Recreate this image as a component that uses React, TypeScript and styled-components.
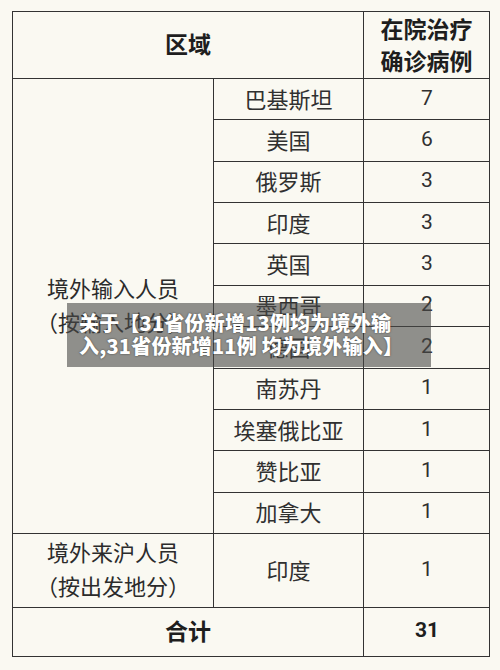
import React from 'react'
import styled, { createGlobalStyle } from 'styled-components'

const GlobalStyle = createGlobalStyle`
  html, body {
    margin: 0;
    padding: 0;
    background: #faf9f2;
  }
  body {
    font-family: 'Noto Sans CJK SC', 'Noto Sans', sans-serif;
    color: #2b2b2b;
  }
`

const rows = [
  { place: '巴基斯坦', count: 7 },
  { place: '美国', count: 6 },
  { place: '俄罗斯', count: 3 },
  { place: '印度', count: 3 },
  { place: '英国', count: 3 },
  { place: '墨西哥', count: 2 },
  { place: '德国', count: 2 },
  { place: '南苏丹', count: 1 },
  { place: '埃塞俄比亚', count: 1 },
  { place: '赞比亚', count: 1 },
  { place: '加拿大', count: 1 },
]

const App = () => {
  return (
    <>
      <GlobalStyle />
      <Page>
        <Table>
          <Cell $span={2} $bold>区域</Cell>
          <Cell $bold $tight>在院治疗<br />确诊病例</Cell>

          <GroupCell $rows={rows.length}>
            境外输入人员<br />（按输入地分）
          </GroupCell>
          {rows.map((r) => (
            <React.Fragment key={r.place}>
              <Cell>{r.place}</Cell>
              <Cell $num>{r.count}</Cell>
            </React.Fragment>
          ))}

          <GroupCell $rows={1}>
            境外来沪人员<br />（按出发地分）
          </GroupCell>
          <Cell>印度</Cell>
          <Cell $num>1</Cell>

          <Cell $span={2} $bold>合计</Cell>
          <Cell $bold $num>31</Cell>
        </Table>

        <Banner>
          关于【31省份新增13例均为境外输<br />入,31省份新增11例 均为境外输入】
        </Banner>
      </Page>
    </>
  )
}

export default App

const Page = styled.div`
  position: relative;
  width: 500px;
  height: 670px;
  padding: 11px 0 0 12px;
  box-sizing: border-box;
`

const Table = styled.div`
  display: grid;
  grid-template-columns: 201px 150px 126px;
  grid-template-rows: 67px repeat(11, 41.36px) 74px 49px;
  width: 478px;
  border-top: 1px solid #333;
  border-left: 1px solid #333;
  box-sizing: border-box;
`

const Cell = styled.div<{ $span?: number; $bold?: boolean; $num?: boolean; $tight?: boolean }>`
  grid-column: span ${(p) => p.$span ?? 1};
  display: flex;
  align-items: center;
  justify-content: center;
  text-align: center;
  border-right: 1px solid #333;
  border-bottom: 1px solid #333;
  padding-bottom: ${(p) => (p.$num ? '2px' : '3px')};
  font-size: ${(p) => (p.$num ? '21px' : '22px')};
  font-family: ${(p) =>
    p.$num ? "Roboto, 'Noto Sans', sans-serif" : "'Noto Sans CJK SC', sans-serif"};
  font-weight: ${(p) => (p.$bold ? 700 : 400)};
  color: ${(p) => (p.$bold ? '#1e1e1e' : '#303030')};
  line-height: ${(p) => (p.$tight ? '32px' : '1')};
  ${(p) => p.$bold && !p.$num && 'font-size: 23px;'}
  ${(p) => p.$num && 'padding-left: 1px;'}
`

const GroupCell = styled.div<{ $rows: number }>`
  grid-row: span ${(p) => p.$rows};
  display: flex;
  align-items: center;
  justify-content: center;
  text-align: center;
  border-right: 1px solid #333;
  border-bottom: 1px solid #333;
  font-size: 22px;
  line-height: 34px;
  color: #2b2b2b;
  padding-bottom: 4px;
`

const Banner = styled.div`
  position: absolute;
  left: 67px;
  top: 303px;
  width: 364px;
  height: 64px;
  box-sizing: border-box;
  padding: 8px 0 0 12px;
  background: rgba(72, 72, 70, 0.6);
  color: #fff;
  font-family: 'Noto Sans CJK SC', sans-serif;
  font-weight: 900;
  font-size: 20px;
  letter-spacing: 0.2px;
  line-height: 23px;
  white-space: nowrap;
  text-shadow: 0 0 2px rgba(0, 0, 0, 0.6);
`
